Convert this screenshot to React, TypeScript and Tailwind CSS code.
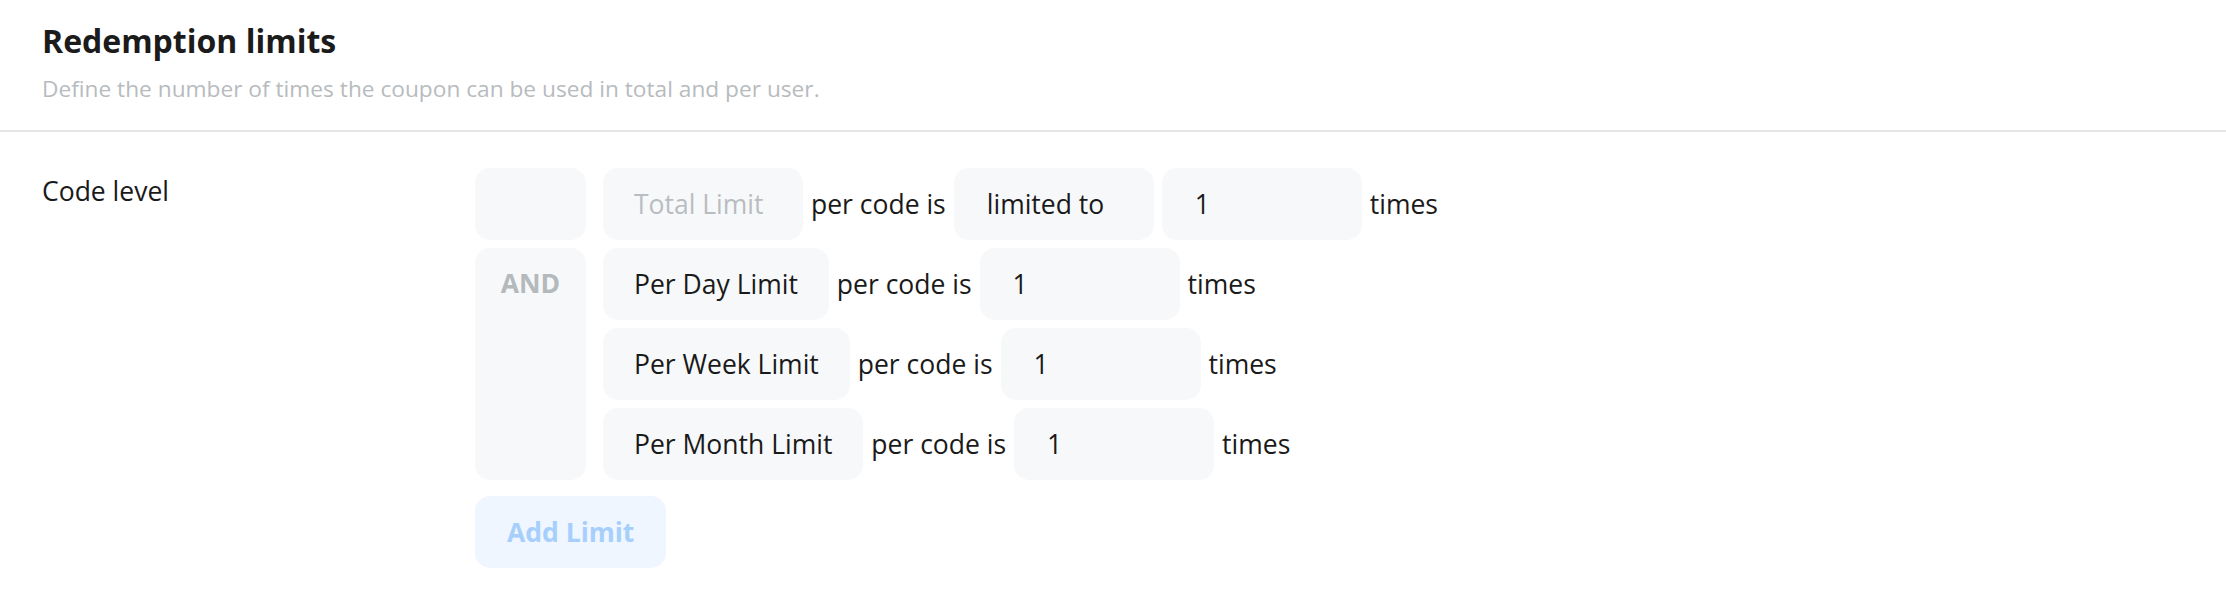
import React from 'react';

type Row = { label: string; placeholder?: boolean; op?: string; value: string };

const rows: Row[] = [
  { label: 'Total Limit', placeholder: true, op: 'limited to', value: '1' },
  { label: 'Per Day Limit', value: '1' },
  { label: 'Per Week Limit', value: '1' },
  { label: 'Per Month Limit', value: '1' },
];

function LimitRow({ row }: { row: Row }) {
  return (
    <div className="flex h-[72px] items-center gap-2">
      <div
        className={
          'flex h-full min-w-[200px] items-center rounded-[15px] bg-[#f7f8fa] px-[31px] ' +
          (row.placeholder ? 'text-[#b9bdc0]' : 'text-[#1a1a1a]')
        }
      >
        {row.label}
      </div>
      <span>per code is</span>
      {row.op && (
        <div className="flex h-full w-[200px] items-center rounded-[15px] bg-[#f7f8fa] px-[33px]">
          {row.op}
        </div>
      )}
      <div className="flex h-full w-[200px] items-center rounded-[15px] bg-[#f7f8fa] px-[33px]">
        {row.value}
      </div>
      <span>times</span>
    </div>
  );
}

export default function App() {
  return (
    <div className="min-h-[598px] w-full bg-white font-['Open_Sans',sans-serif] text-[#1a1a1a] [font-variant-ligatures:none]">
      <div className="px-[42px] pt-[22px] pb-[28px]">
        <h2 className="text-[32px] font-bold leading-[38px] text-[#1b1b1b]">Redemption limits</h2>
        <p className="mt-[16px] text-[22.7px] leading-[26px] text-[#b7bbbe]">
          Define the number of times the coupon can be used in total and per user.
        </p>
      </div>
      <div className="h-[2px] bg-[#e6e6e6]" />
      <div className="flex px-[42px] pt-[36px] text-[26.5px] leading-[34px]">
        <div className="mt-[6px] w-[433px] shrink-0">Code level</div>
        <div className="flex flex-col gap-4">
          <div className="flex gap-[17px]">
            <div className="flex w-[111px] flex-col gap-2">
              <div className="h-[72px] rounded-[15px] bg-[#f7f8fa]" />
              <div className="flex-1 rounded-[15px] bg-[#f7f8fa] pt-[18px] text-center font-bold text-[#b4b9bc]">
                AND
              </div>
            </div>
            <div className="flex flex-col gap-2">
              {rows.map((r) => (
                <LimitRow key={r.label} row={r} />
              ))}
            </div>
          </div>
          <div>
            <button className="h-[72px] rounded-[15px] bg-[#eff6ff] px-[32px] font-bold text-[#a6cffc]">
              Add Limit
            </button>
          </div>
        </div>
      </div>
    </div>
  );
}
